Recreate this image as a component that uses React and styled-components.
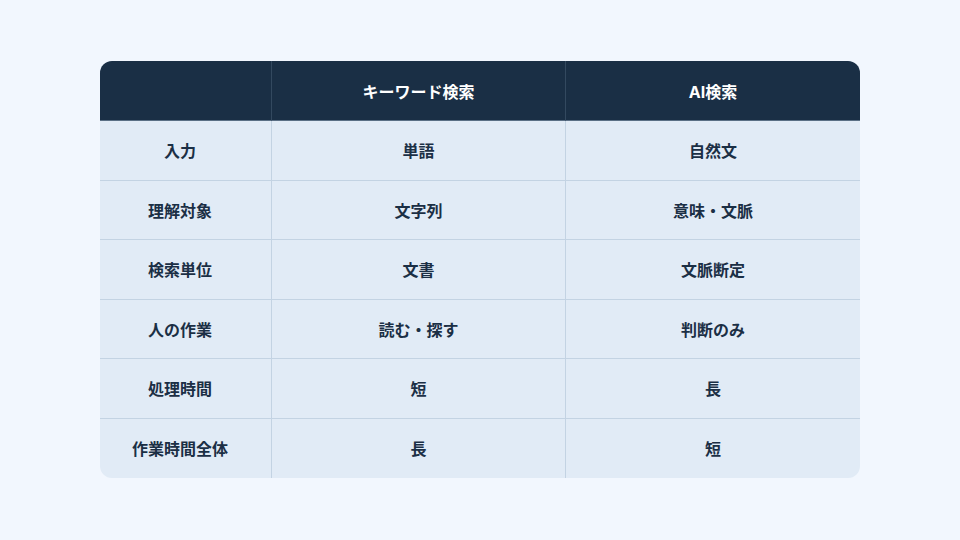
import styled, { createGlobalStyle } from "styled-components";

const GlobalStyle = createGlobalStyle`
  html, body {
    margin: 0;
    padding: 0;
    background: #f2f7fe;
    font-family: "Inter", "Noto Sans CJK JP", sans-serif;
  }
`;

const Page = styled.div`
  width: 960px;
  height: 540px;
  display: flex;
  justify-content: center;
  padding-top: 61px;
  box-sizing: border-box;
`;

const Table = styled.div`
  width: 760px;
  height: 417px;
  display: grid;
  grid-template-columns: 171px 294px 1fr;
  grid-template-rows: 60px repeat(6, 1fr);
  border-radius: 12px;
  overflow: hidden;
  background: #e1ebf6;
`;

const Cell = styled.div`
  display: flex;
  align-items: center;
  justify-content: center;
  padding-right: ${(p) => (p.$first ? "11px" : "0")};
  font-family: "Inter", "Noto Sans CJK JP", sans-serif;
  font-size: 16px;
  font-weight: 700;
  color: ${(p) => (p.$head ? "#ffffff" : "#1b2f45")};
  background: ${(p) => (p.$head ? "#1a2f45" : "transparent")};
  border-left: ${(p) =>
    p.$first ? "none" : p.$head ? "1px solid #33495f" : "1px solid #c3d3e3"};
  border-bottom: ${(p) =>
    p.$last ? "none" : p.$head ? "1px solid #5a6f85" : "1px solid #c3d3e3"};
`;

const header = ["", "キーワード検索", "AI検索"];

const rows = [
  ["入力", "単語", "自然文"],
  ["理解対象", "文字列", "意味・文脈"],
  ["検索単位", "文書", "文脈断定"],
  ["人の作業", "読む・探す", "判断のみ"],
  ["処理時間", "短", "長"],
  ["作業時間全体", "長", "短"],
];

export default function App() {
  return (
    <>
      <GlobalStyle />
      <Page>
        <Table>
          {header.map((h, i) => (
            <Cell key={"h" + i} $head $first={i === 0}>
              {h}
            </Cell>
          ))}
          {rows.map((row, r) =>
            row.map((c, i) => (
              <Cell
                key={r + "-" + i}
                $first={i === 0}
                $last={r === rows.length - 1}
              >
                {c}
              </Cell>
            ))
          )}
        </Table>
      </Page>
    </>
  );
}
